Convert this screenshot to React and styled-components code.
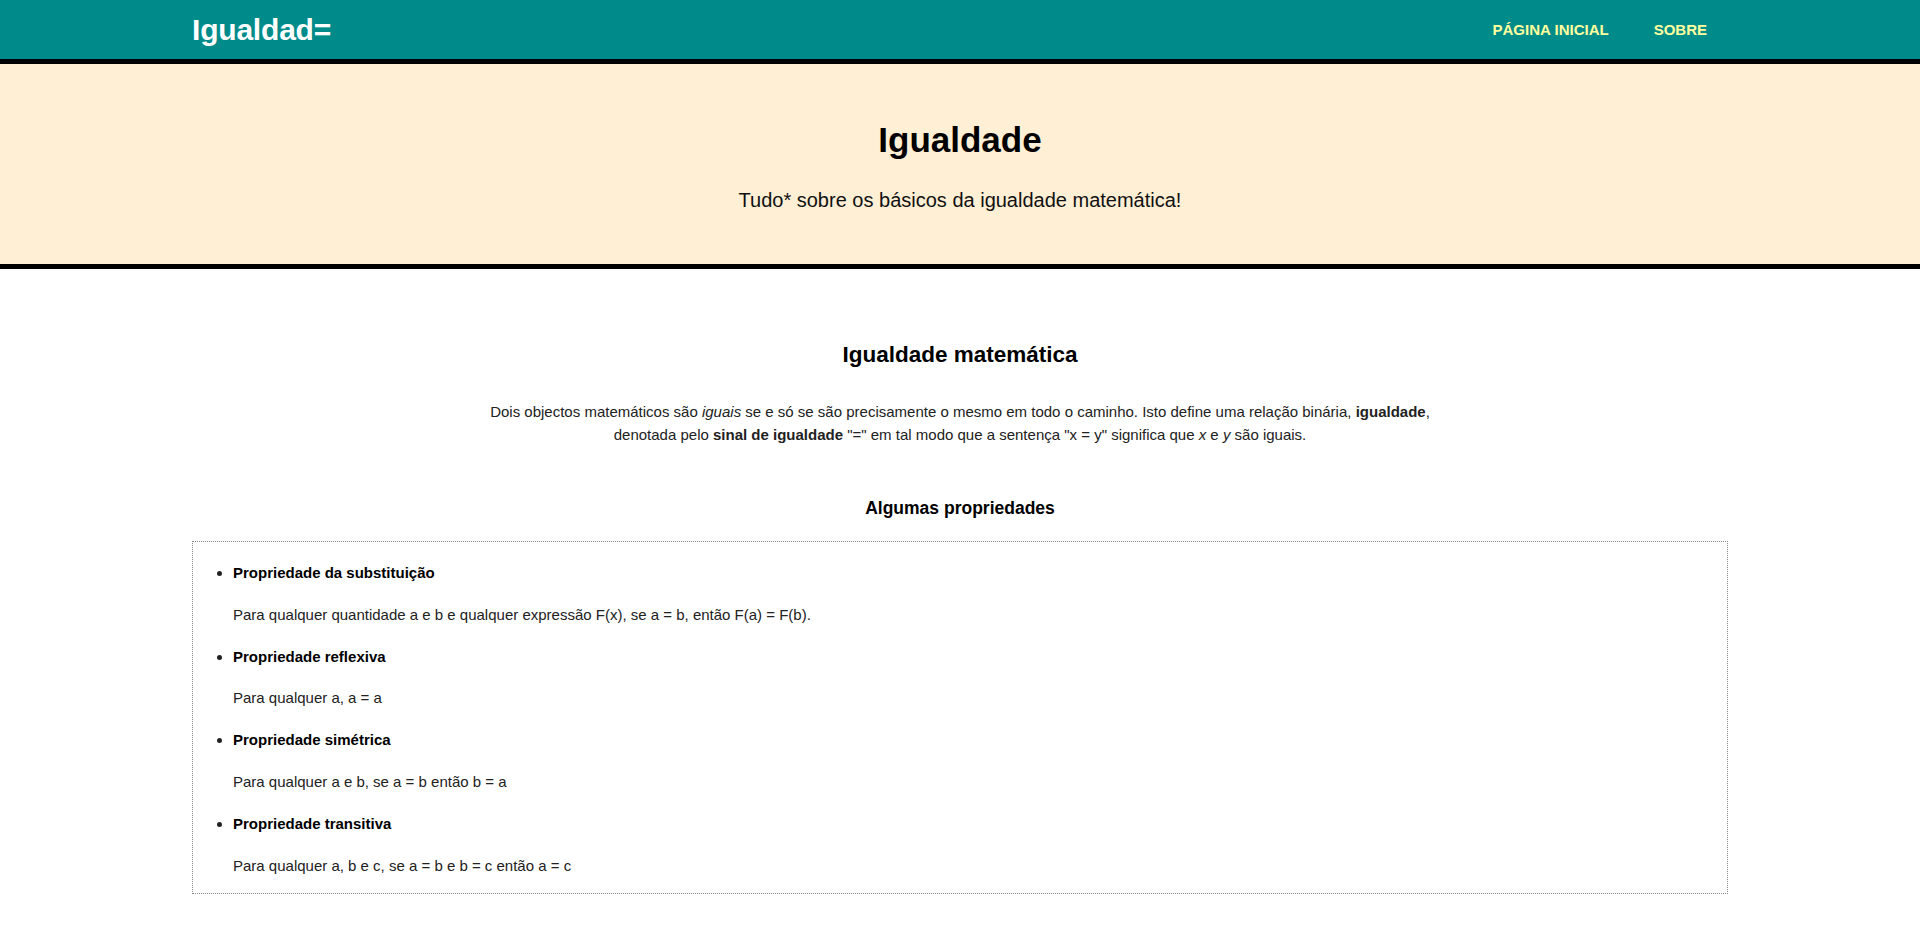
import React from "react";
import styled, { createGlobalStyle } from "styled-components";

const GlobalStyle = createGlobalStyle`
  body {
    margin: 0;
    font-family: "Liberation Sans", Arial, sans-serif;
    color: #222;
    background: #fff;
  }
`;

const Header = styled.header`
  background: #008b8b;
  border-bottom: 5px solid #000;
`;

const Container = styled.div`
  width: 80%;
  margin: 0 auto;
`;

const NavBar = styled(Container)`
  height: 59px;
  display: flex;
  align-items: center;
  justify-content: space-between;
`;

const Logo = styled.a`
  font-size: 30px;
  font-weight: bold;
  color: #fff;
  text-decoration: none;
  letter-spacing: -0.2px;
`;

const NavList = styled.nav`
  display: flex;
  padding-right: 1px;
`;

const NavLink = styled.a`
  padding: 0 20px 0 25px;
  font-size: 15px;
  font-weight: bold;
  color: #ffff9e;
  text-decoration: none;
  text-transform: uppercase;
`;

const Hero = styled.section`
  background: #ffefd5;
  border-bottom: 5px solid #000;
  height: 205px;
  box-sizing: border-box;
  padding-top: 55px;
  text-align: center;
`;

const HeroTitle = styled.h1`
  margin: 0;
  font-size: 35px;
  line-height: 42px;
  color: #000;
`;

const HeroSubtitle = styled.p`
  margin: 27px 0 0;
  font-size: 20px;
  line-height: 24px;
  color: #111;
`;

const Main = styled.main`
  padding: 72px 0 45px;
`;

const SectionTitle = styled.h2`
  margin: 0;
  text-align: center;
  font-size: ${(p) => p.size}px;
  line-height: ${(p) => p.lh}px;
  color: #000;
`;

const Intro = styled.p`
  width: 50%;
  margin: 33px auto 51px;
  text-align: center;
  font-size: 15px;
  line-height: 22.5px;
`;

const PropBox = styled(Container)`
  margin-top: 22px;
  border: 1px dotted #888;
  box-sizing: border-box;
`;

const PropList = styled.ul`
  margin: 0;
  padding: 21px 40px 17px;
  list-style: disc;
`;

const PropItem = styled.li`
  font-size: 15px;
  line-height: 20px;
  & + & {
    margin-top: 21.8px;
  }
`;

const PropName = styled.strong`
  display: block;
  color: #000;
`;

const PropText = styled.p`
  margin: 21.8px 0 0;
`;

const properties = [
  {
    name: "Propriedade da substituição",
    text: "Para qualquer quantidade a e b e qualquer expressão F(x), se a = b, então F(a) = F(b).",
  },
  { name: "Propriedade reflexiva", text: "Para qualquer a, a = a" },
  {
    name: "Propriedade simétrica",
    text: "Para qualquer a e b, se a = b então b = a",
  },
  {
    name: "Propriedade transitiva",
    text: "Para qualquer a, b e c, se a = b e b = c então a = c",
  },
];

export default function App() {
  return (
    <>
      <GlobalStyle />
      <Header>
        <NavBar>
          <Logo href="#">Igualdad=</Logo>
          <NavList>
            <NavLink href="#">Página inicial</NavLink>
            <NavLink href="#">Sobre</NavLink>
          </NavList>
        </NavBar>
      </Header>
      <Hero>
        <HeroTitle>Igualdade</HeroTitle>
        <HeroSubtitle>Tudo* sobre os básicos da igualdade matemática!</HeroSubtitle>
      </Hero>
      <Main>
        <SectionTitle size={22.5} lh={27}>
          Igualdade matemática
        </SectionTitle>
        <Intro>
          Dois objectos matemáticos são <em>iguais</em> se e só se são
          precisamente o mesmo em todo o caminho. Isto define uma relação
          binária, <strong>igualdade</strong>, denotada pelo{" "}
          <strong>sinal de igualdade</strong> "=" em tal modo que a sentença "x
          = y" significa que <em>x</em> e <em>y</em> são iguais.
        </Intro>
        <SectionTitle size={17.5} lh={22}>
          Algumas propriedades
        </SectionTitle>
        <PropBox>
          <PropList>
            {properties.map((p) => (
              <PropItem key={p.name}>
                <PropName>{p.name}</PropName>
                <PropText>{p.text}</PropText>
              </PropItem>
            ))}
          </PropList>
        </PropBox>
      </Main>
    </>
  );
}
